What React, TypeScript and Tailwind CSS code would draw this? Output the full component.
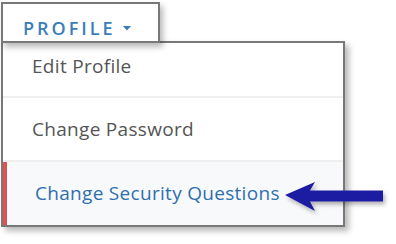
import React from "react";

export default function App() {
  const font = { fontFamily: '"Open Sans", "Liberation Sans", sans-serif' };
  return (
    <div className="relative w-[396px] h-[244px] bg-white overflow-hidden" style={font}>
      <div className="flex flex-col pl-[1px] pt-[2px]">
        <div className="relative z-10 w-[159px] h-[41px] border-2 border-[#787878] bg-white shadow-[3px_4px_6px_rgba(0,0,0,0.28)] flex items-center pl-[20px] pt-[11px]">
          <span className="text-[18px] font-semibold tracking-[3px] text-[#3b7dbb] leading-none">PROFILE</span>
          <svg className="ml-[7px] mt-[1px]" width="8" height="5" viewBox="0 0 8 5">
            <path d="M0 0 L8 0 L4 4.5 Z" fill="#3b7dbb" />
          </svg>
        </div>
        <div className="-mt-[2px] w-[344px] h-[186px] border-2 border-[#787878] bg-white shadow-[4px_4px_6px_rgba(0,0,0,0.28)] flex flex-col">
          <div className="h-[55px] border-b-2 border-[#efefef] flex items-center pl-[29px] pb-[6px] text-[19px] font-medium tracking-[0.3px] text-[#555]">
            Edit Profile
          </div>
          <div className="h-[64px] border-b-2 border-[#efefef] flex items-center pl-[29px] text-[19px] font-medium tracking-[0.3px] text-[#555]">
            Change Password
          </div>
          <div className="flex-1 bg-[#f8f9fb] border-l-[4px] border-[#e05252] flex items-center pl-[28px] text-[19px] font-medium tracking-[0.3px] text-[#2f6fae]">
            Change Security Questions
          </div>
        </div>
      </div>
      <svg className="absolute left-[282px] top-[178px]" width="110" height="40" viewBox="0 0 110 40">
        <defs>
          <filter id="sh" x="-20%" y="-50%" width="140%" height="200%">
            <feDropShadow dx="2" dy="3" stdDeviation="2" floodColor="#000" floodOpacity="0.3" />
          </filter>
        </defs>
        <path
          d="M3 17 L33 4 L28 12.5 L101 12.5 L101 23.5 L28 23.5 L33 33 Z"
          fill="#1e1ea3"
          filter="url(#sh)"
        />
      </svg>
    </div>
  );
}
